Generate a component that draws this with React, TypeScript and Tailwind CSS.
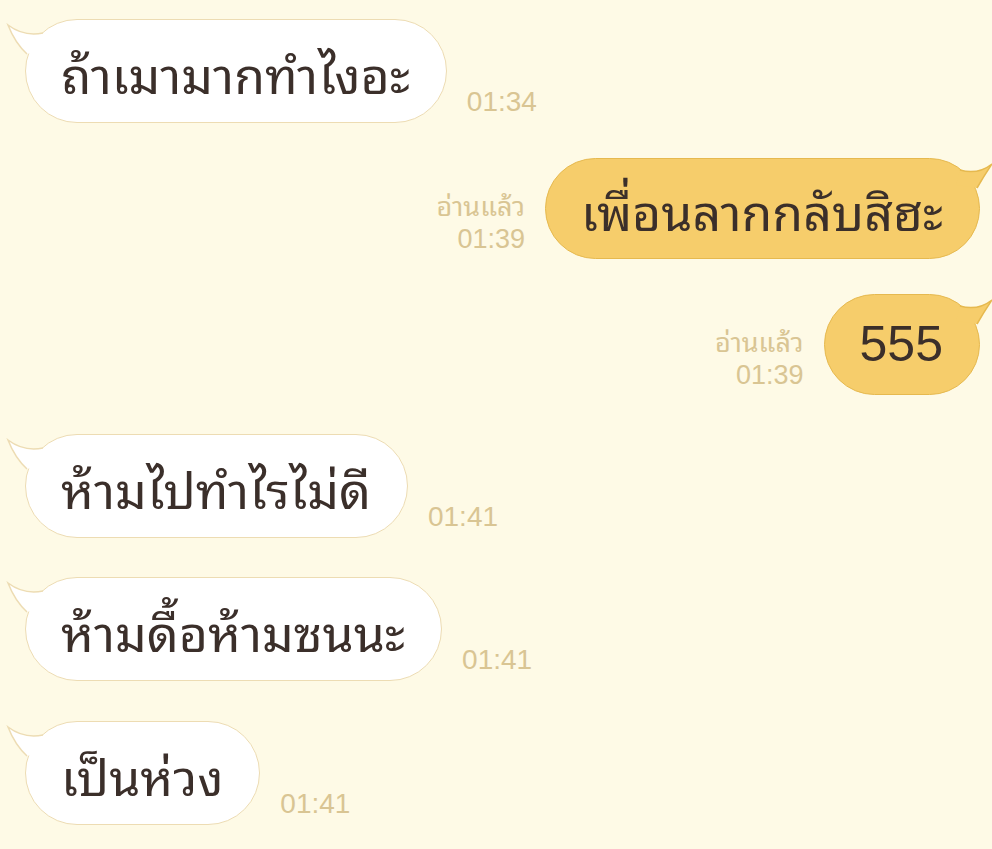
import React from "react";

type Msg = {
  text: string;
  time: string;
  mine?: boolean;
  gap: string;
};

const messages: Msg[] = [
  { text: "ถ้าเมามากทำไงอะ", time: "01:34", gap: "mb-[35px]" },
  { text: "เพื่อนลากกลับสิฮะ", time: "01:39", mine: true, gap: "mb-[35px]" },
  { text: "555", time: "01:39", mine: true, gap: "mb-[39px]" },
  { text: "ห้ามไปทำไรไม่ดี", time: "01:41", gap: "mb-[39px]" },
  { text: "ห้ามดื้อห้ามซนนะ", time: "01:41", gap: "mb-[40px]" },
  { text: "เป็นห่วง", time: "01:41", gap: "mb-0" },
];

// little horn at the top corner of each bubble
function Tail({ mine }: { mine?: boolean }) {
  const fill = mine ? "#f6cd6b" : "#ffffff";
  const stroke = mine ? "#e6b94f" : "#eddcb3";
  if (mine) {
    return (
      <svg
        className="absolute right-0 top-0 overflow-visible"
        width="1"
        height="1"
      >
        <path d="M -18 11 Q 0 16 14 5 Q 6 17 -1 29 L -22 26 Z" fill={fill} />
        <path
          d="M -18 11 Q 0 16 14 5 Q 6 17 -1 29"
          fill="none"
          stroke={stroke}
          strokeWidth="1.5"
        />
      </svg>
    );
  }
  return (
    <svg className="absolute left-0 top-0 overflow-visible" width="1" height="1">
      <path d="M 17 13 Q -2 17 -18 5 Q -11 23 1 34 L 24 28 Z" fill={fill} />
      <path
        d="M 17 13 Q -2 17 -18 5 Q -11 23 1 34"
        fill="none"
        stroke={stroke}
        strokeWidth="1.5"
      />
    </svg>
  );
}

function Bubble({ msg }: { msg: Msg }) {
  const isThai = !/^\d+$/.test(msg.text);
  return (
    <div
      className={`relative flex items-center rounded-full border-[1.5px] pl-[35px] pr-[36px] text-[50px] text-[#3b2f2a] ${
        msg.mine
          ? "h-[101px] border-[#e6b94f] bg-[#f6cd6b]"
          : "h-[104px] border-[#eddcb3] bg-white"
      }`}
    >
      <Tail mine={msg.mine} />
      <span className={`relative ${isThai ? "pt-[12px]" : ""}`}>{msg.text}</span>
    </div>
  );
}

export default function App() {
  return (
    <div
      className="min-h-[849px] w-[992px] bg-[#fefae6] pl-[25px] pr-[12px] pt-[19px]"
      style={{
        fontFamily:
          '"Liberation Sans", "Noto Sans Thai Looped", "Noto Sans Thai", "Noto Sans", sans-serif',
      }}
    >
      <div className="flex flex-col">
        {messages.map((m, i) =>
          m.mine ? (
            <div key={i} className={`flex items-end justify-end gap-[20px] ${m.gap}`}>
              <div className="mb-[4px] flex flex-col items-end text-[27px] leading-[32px] text-[#d9c593]">
                <span>อ่านแล้ว</span>
                <span>{m.time}</span>
              </div>
              <Bubble msg={m} />
            </div>
          ) : (
            <div key={i} className={`flex items-end gap-[20px] ${m.gap}`}>
              <Bubble msg={m} />
              <span className="mb-0 text-[28px] text-[#d9c593]">{m.time}</span>
            </div>
          )
        )}
      </div>
    </div>
  );
}
